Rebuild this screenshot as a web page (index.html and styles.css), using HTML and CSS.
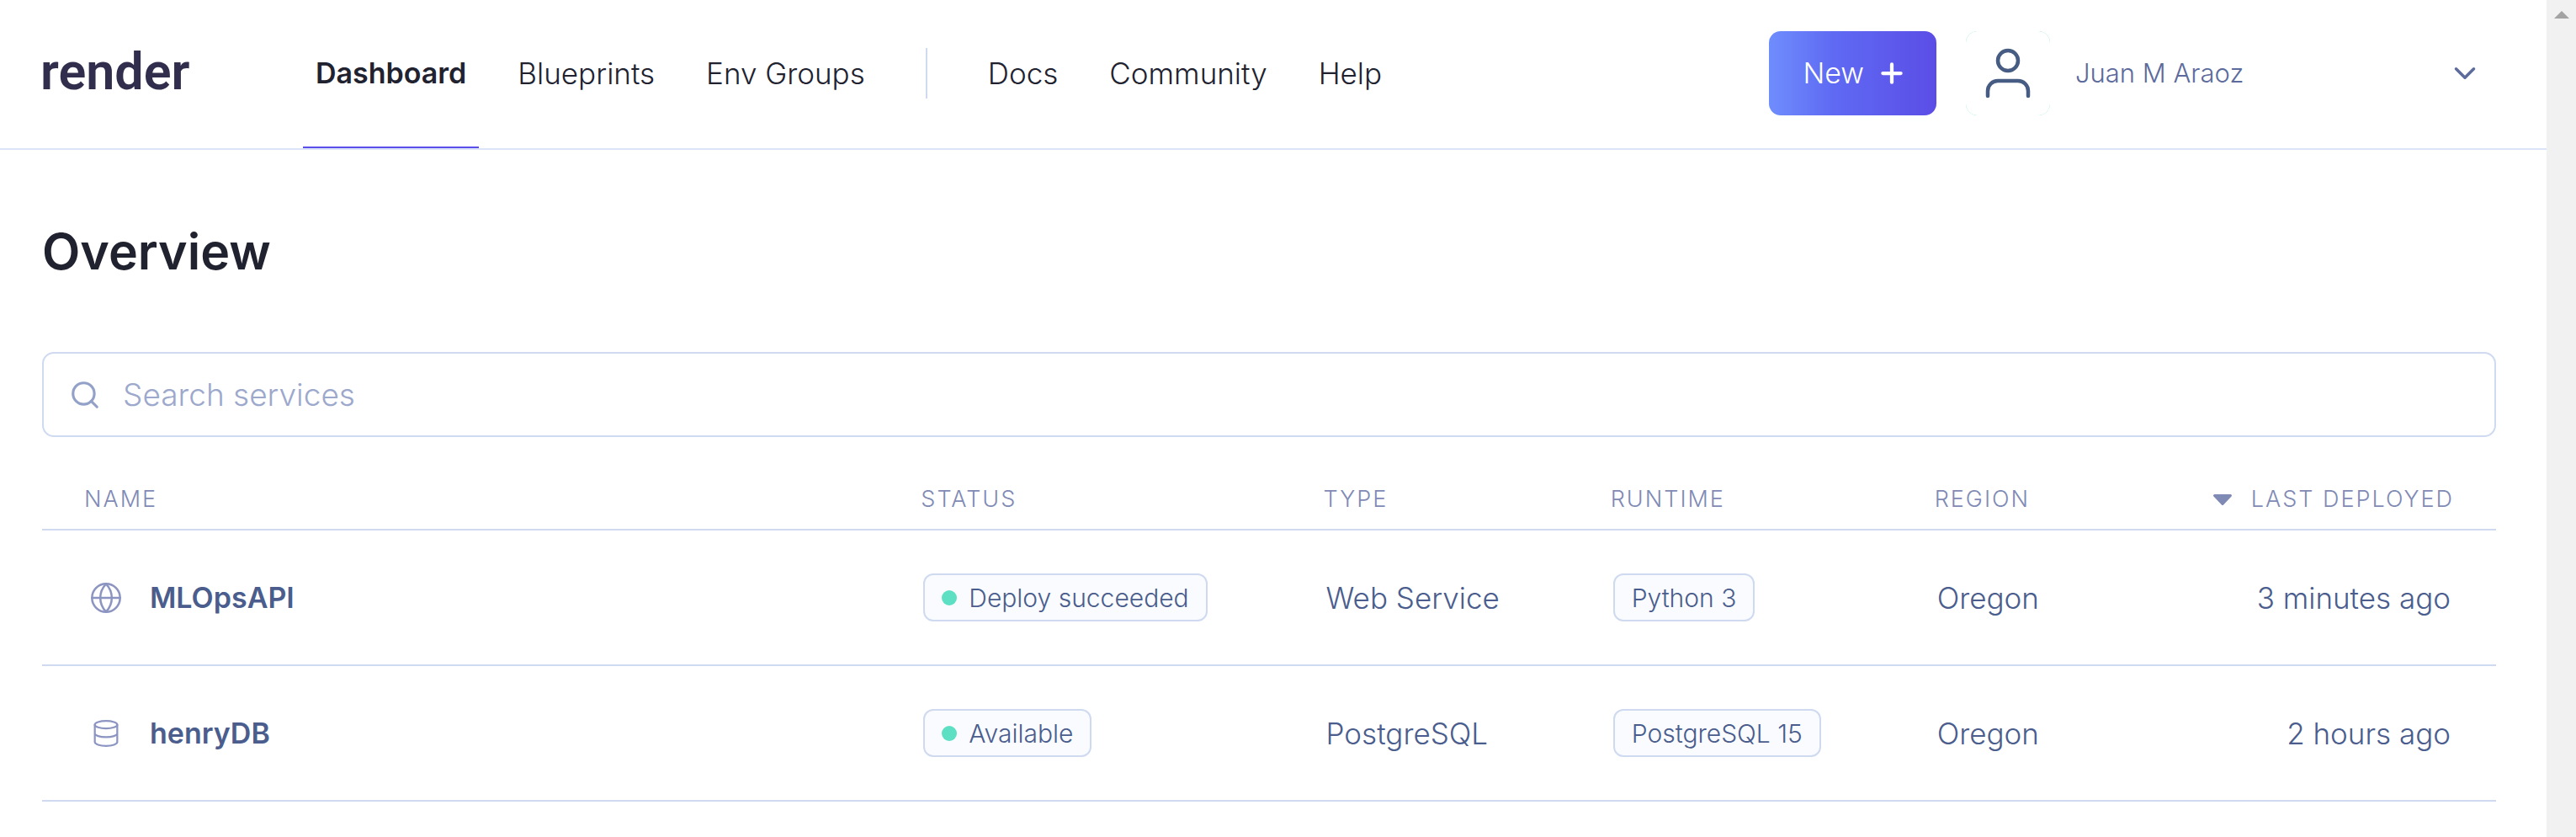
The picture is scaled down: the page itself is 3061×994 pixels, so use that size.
FILE: index.html
```
<!DOCTYPE html>
<html lang="en">
<head>
<meta charset="utf-8">
<title>Overview · Render Dashboard</title>
<link rel="stylesheet" href="styles.css">
</head>
<body>
<div class="page">
  <header class="header">
    <a class="logo" href="#">render</a>
    <nav class="nav">
      <a class="nav-link active" href="#">Dashboard</a>
      <a class="nav-link" href="#">Blueprints</a>
      <a class="nav-link" href="#">Env Groups</a>
      <span class="divider"></span>
      <a class="nav-link" href="#">Docs</a>
      <a class="nav-link" href="#">Community</a>
      <a class="nav-link" href="#">Help</a>
    </nav>
    <button class="new-button" type="button">New
      <svg class="plus" viewBox="0 0 24 24" aria-hidden="true"><path d="M12 4.500v15M4.500 12h15"/></svg>
    </button>
    <button class="account" type="button">
      <span class="avatar">
        <svg viewBox="0 0 24 24" aria-hidden="true"><path d="M20 21v-2a4 4 0 0 0-4-4H8a4 4 0 0 0-4 4v2"/><circle cx="12" cy="7" r="4"/></svg>
      </span>
      <span class="account-name">Juan M Araoz</span>
      <svg class="chevron" viewBox="0 0 24 24" aria-hidden="true"><path d="M6 9l6 6 6-6"/></svg>
    </button>
  </header>
  <main class="main">
    <h1 class="title">Overview</h1>
    <label class="search">
      <svg class="search-icon" viewBox="0 0 24 24" aria-hidden="true"><circle cx="11" cy="11" r="8"/><path d="M21 21l-4.35-4.35"/></svg>
      <input class="search-input" type="text" placeholder="Search services" aria-label="Search services">
    </label>
    <table class="services">
      <colgroup>
        <col class="col-name"><col class="col-status"><col class="col-type"><col class="col-runtime"><col class="col-region"><col>
      </colgroup>
      <thead>
        <tr>
          <th>NAME</th><th>STATUS</th><th>TYPE</th><th>RUNTIME</th><th>REGION</th>
          <th><span class="sort"><svg class="caret" viewBox="0 0 24 15" aria-hidden="true"><path d="M2.500 2.500h19l-9.500 10z"/></svg>LAST DEPLOYED</span></th>
        </tr>
      </thead>
      <tbody>
        <tr>
          <td><a class="service" href="#"><svg class="service-icon" viewBox="0 0 24 24" aria-hidden="true"><circle cx="12" cy="12" r="10"/><path d="M2 12h20M12 2c2.500 2.700 4.100 6.300 4.100 10s-1.600 7.300-4.100 10c-2.500-2.700-4.100-6.300-4.100-10s1.600-7.300 4.100-10z"/></svg>MLOpsAPI</a></td>
          <td><span class="tag"><span class="dot"></span>Deploy succeeded</span></td>
          <td>Web Service</td>
          <td><span class="tag">Python 3</span></td>
          <td>Oregon</td>
          <td class="last">3 minutes ago</td>
        </tr>
        <tr>
          <td><a class="service" href="#"><svg class="service-icon" viewBox="-1.500 -1.500 27 27" aria-hidden="true"><ellipse cx="12" cy="5" rx="9" ry="3"/><path d="M21 12c0 1.660-4 3-9 3s-9-1.340-9-3M3 5v14c0 1.660 4 3 9 3s9-1.340 9-3V5"/></svg>henryDB</a></td>
          <td><span class="tag"><span class="dot"></span>Available</span></td>
          <td>PostgreSQL</td>
          <td><span class="tag">PostgreSQL 15</span></td>
          <td>Oregon</td>
          <td class="last">2 hours ago</td>
        </tr>
      </tbody>
    </table>
  </main>
</div>
<div class="scrollbar" aria-hidden="true"><svg class="scroll-up" viewBox="0 0 18 9"><path d="M0 9L9 0l9 9z"/></svg></div>
</body>
</html>
```
FILE: styles.css
```
* { box-sizing: border-box; }

body {
  margin: 0;
  display: flex;
  min-height: 100vh;
  background: #fff;
  color: #21222f;
  font-family: Inter, "Liberation Sans", sans-serif;
  font-size: 35px;
  font-weight: 300;
  line-height: 44px;
}

a { color: inherit; text-decoration: none; }

button {
  border: 0;
  background: none;
  font: inherit;
  cursor: pointer;
}

svg {
  flex: none;
  fill: none;
  stroke: currentColor;
  stroke-width: 2;
  stroke-linecap: round;
  stroke-linejoin: round;
}

.page { flex: 1; min-width: 0; }

.header {
  display: flex;
  align-items: stretch;
  height: 178px;
  padding: 0 60px 0 48px;
  border-bottom: 2px solid #dbe4f9;
}

.logo {
  align-self: center;
  width: 312px;
  padding-bottom: 6px;
  color: #302e4c;
  font-family: Roboto, sans-serif;
  font-size: 61px;
  font-weight: 600;
  line-height: 72px;
}

.nav {
  display: flex;
  flex: 1;
  gap: 31px;
}

.nav-link {
  display: flex;
  align-items: center;
  padding: 0 15px;
  border-bottom: 2px solid transparent;
  white-space: nowrap;
}

.nav-link.active {
  border-color: #5a4fea;
  font-size: 34px;
  font-weight: 600;
}

.divider {
  align-self: center;
  width: 2px;
  height: 60px;
  margin: 0 26px 2px;
  background: #cfdaf0;
}

.new-button {
  display: flex;
  align-items: center;
  align-self: center;
  gap: 16px;
  height: 100px;
  margin: 0 35px 2px 0;
  padding: 0 36px 0 40px;
  border-radius: 14px;
  background: linear-gradient(90deg, #6f8dfd, #5f6af3 38%, #5b4de6);
  color: #fff;
  font-size: 34px;
}

.plus { width: 34px; height: 34px; stroke-width: 3; }

.account {
  display: flex;
  align-items: center;
  width: 630px;
  padding: 0 16px 2px 0;
  color: #5c6b9c;
  font-size: 31px;
}

.avatar {
  display: flex;
  margin-right: 30px;
  border-radius: 14px;
  background: #5cdfc3;
  color: #475c82;
}

.avatar svg {
  width: 100px;
  height: 100px;
  padding: 14px;
  border-radius: 14px;
  background: #fff;
  stroke-width: 1.5;
}

.account-name { flex: 1; text-align: left; }

.chevron { width: 42px; height: 42px; }

.main { padding: 85px 60px 0 50px; }

.title {
  margin: 0 0 83px;
  font-size: 59px;
  font-weight: 600;
  line-height: 72px;
}

.search {
  display: flex;
  align-items: center;
  gap: 26px;
  height: 101px;
  padding: 0 30px;
  border: 2px solid #cfdaf0;
  border-radius: 14px;
}

.search-icon { width: 38px; height: 38px; color: #93a1c9; }

.search-input {
  flex: 1;
  height: 60px;
  padding: 0;
  border: 0;
  outline: 0;
  background: none;
  color: #4a5d8d;
  font: inherit;
  font-size: 37px;
}

.search-input::placeholder { color: #9ca8cc; opacity: 1; }

.services {
  width: 100%;
  table-layout: fixed;
  border-collapse: separate;
  border-spacing: 0;
  color: #4a5d8d;
}

.col-name { width: 34.1%; }
.col-status { width: 16.4%; }
.col-type { width: 11.7%; }
.col-runtime { width: 13.2%; }
.col-region { width: 9%; }

.services th {
  padding: 56px 50px 17px;
  border-bottom: 2px solid #cfdaf0;
  color: #7f8ab5;
  font-size: 27px;
  font-weight: 300;
  line-height: 36px;
  letter-spacing: 2px;
  text-align: left;
  white-space: nowrap;
}

.services td {
  height: 161px;
  padding: 0 0 0 53px;
  border-bottom: 2px solid #cfdaf0;
  white-space: nowrap;
}

.services td.last { padding-right: 54px; text-align: right; }

.sort {
  display: flex;
  align-items: center;
  justify-content: flex-end;
  gap: 22px;
}

.caret { width: 24px; height: 15px; fill: currentColor; stroke-width: 3; }

.service {
  display: flex;
  align-items: center;
  gap: 32px;
  padding-left: 3px;
  font-size: 34px;
  font-weight: 600;
}

.service-icon { width: 40px; height: 40px; color: #8c95c2; stroke-width: 1.5; }

.tag {
  display: inline-flex;
  align-items: center;
  gap: 14px;
  height: 57px;
  padding: 0 20px;
  border: 2px solid #cfdaf0;
  border-radius: 12px;
  background: #f9fbfe;
  font-size: 30px;
  vertical-align: middle;
}

.dot { width: 18px; height: 18px; border-radius: 50%; background: #5cdfc3; }

.scrollbar {
  display: flex;
  justify-content: center;
  width: 35px;
  padding-top: 13px;
  background: #f1f1f1;
}

.scroll-up { width: 18px; height: 9px; fill: #a3a3a3; stroke: none; }
```
